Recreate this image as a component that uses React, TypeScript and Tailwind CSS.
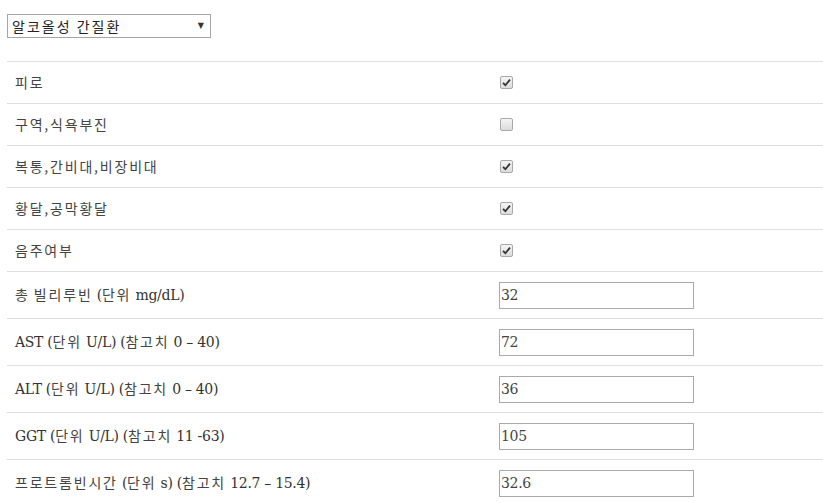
import React from "react";

const latin = '"DejaVu Serif", "Noto Sans CJK KR", serif';
const korean = '"Noto Sans CJK KR", sans-serif';

type Row =
  | { label: string; kind: "check"; checked: boolean }
  | { label: string; kind: "text"; value: string };

const rows: Row[] = [
  { label: "피로", kind: "check", checked: true },
  { label: "구역,식욕부진", kind: "check", checked: false },
  { label: "복통,간비대,비장비대", kind: "check", checked: true },
  { label: "황달,공막황달", kind: "check", checked: true },
  { label: "음주여부", kind: "check", checked: true },
  { label: "총 빌리루빈 (단위 mg/dL)", kind: "text", value: "32" },
  { label: "AST (단위 U/L) (참고치 0 – 40)", kind: "text", value: "72" },
  { label: "ALT (단위 U/L) (참고치 0 – 40)", kind: "text", value: "36" },
  { label: "GGT (단위 U/L) (참고치 11 -63)", kind: "text", value: "105" },
  { label: "프로트롬빈시간 (단위 s) (참고치 12.7 – 15.4)", kind: "text", value: "32.6" },
];

// korean runs get the sans font with a little spacing, the rest stays slab-ish serif
function Label({ text }: { text: string }) {
  const parts = text.split(/([\uAC00-\uD7A3,]+)/).filter(Boolean);
  return (
    <>
      {parts.map((p, i) =>
        /[\uAC00-\uD7A3]/.test(p) ? (
          <span key={i} className="tracking-[1.8px] text-[14px] text-[#444]" style={{ fontFamily: korean }}>
            {p}
          </span>
        ) : (
          <span key={i} className="text-[14px] tracking-[-0.3px]">{p}</span>
        )
      )}
    </>
  );
}

function Check({ on }: { on: boolean }) {
  return (
    <span className="inline-flex w-[13px] h-[13px] items-center justify-center rounded-[2px] border border-[#a9a9a9] bg-gradient-to-b from-[#f4f4f4] to-[#dcdcdc]">
      {on && (
        <svg width="9" height="9" viewBox="0 0 9 9">
          <path d="M1 4.8 L3.4 7.2 L8 1.6" fill="none" stroke="#333" strokeWidth="1.8" />
        </svg>
      )}
    </span>
  );
}

export default function App() {
  return (
    <div className="bg-white w-[823px] h-[503px] overflow-hidden text-[14px] text-[#333]" style={{ fontFamily: latin }}>
      <div className="pl-[7px] pt-[14px]">
        <div className="w-[204px] h-[24px] border border-[#a6a6a6] flex items-center justify-between pl-[4px] pr-[6px] bg-white">
          <span className="text-[14px] text-[#222] tracking-[2px]" style={{ fontFamily: korean }}>알코올성 간질환</span>
          <span className="text-[8px] text-[#333]">▼</span>
        </div>
      </div>
      <div className="ml-[7px] mt-[23px]">
        {rows.map((r) => (
          <div
            key={r.label}
            className={`flex items-center border-t border-[#dddddd] ${r.kind === "check" ? "h-[42px]" : "h-[47px]"}`}
          >
            <div className="w-[492px] pl-[8px] whitespace-nowrap"><Label text={r.label} /></div>
            <div className="flex items-center">
              {r.kind === "check" ? (
                <span className="pl-[1px] flex"><Check on={r.checked} /></span>
              ) : (
                <div className="w-[195px] h-[27px] border border-[#aaaaaa] flex items-center pl-[1px] text-[14px] text-[#444] tracking-[-0.3px]">
                  {r.value}
                </div>
              )}
            </div>
          </div>
        ))}
      </div>
    </div>
  );
}
